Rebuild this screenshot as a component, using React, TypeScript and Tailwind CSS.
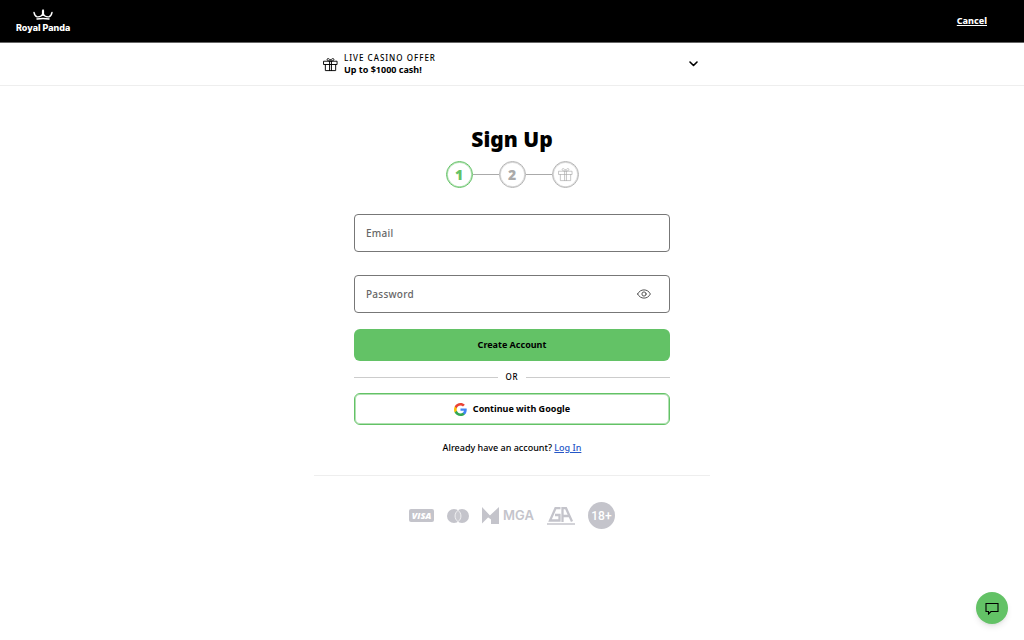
import { useState } from 'react';

const STROKE = {
  fill: 'none',
  stroke: 'currentColor',
  strokeLinecap: 'round',
  strokeLinejoin: 'round',
} as const;

function GiftIcon({ className, strokeWidth = 1 }: { className: string; strokeWidth?: number }) {
  return (
    <svg viewBox="0 0 16 16" className={className} {...STROKE} strokeWidth={strokeWidth}>
      <path d="M1 4.500h14v3.500H1zM2.500 8v6.500h11V8M7 4.500v10M9 4.500v10" />
      <path d="M7 4.300C5.500 4.300 4.300 3.600 4.300 2.600S6.500 1.200 7.500 3h1c1-1.800 3.200-1.400 3.200-.4S10.500 4.300 9 4.300z" />
    </svg>
  );
}

function EyeIcon() {
  return (
    <svg viewBox="0 0 14 10" className="h-[10px] w-[14px]" {...STROKE}>
      <path d="M.6 5C2 2.300 4.300.9 7 .9S12 2.300 13.400 5C12 7.700 9.700 9.100 7 9.100S2 7.700.6 5z" />
      <circle cx="7" cy="5" r="2.100" />
    </svg>
  );
}

function GoogleIcon() {
  return (
    <svg viewBox="0 0 24 24" className="size-[13px]">
      <path fill="#4285F4" d="M23.500 12.300c0-.9-.1-1.600-.2-2.300H12v4.500h6.500c-.3 1.500-1.100 2.800-2.400 3.700v3h3.900c2.200-2.100 3.500-5.100 3.500-8.900z" />
      <path fill="#34A853" d="M12 24c3.200 0 5.900-1.100 7.900-2.900l-3.900-3c-1.100.7-2.400 1.200-4 1.200-3.100 0-5.800-2.100-6.700-5H1.300v3.100C3.300 21.300 7.300 24 12 24z" />
      <path fill="#FBBC05" d="M5.300 14.300c-.3-.7-.4-1.500-.4-2.300s.1-1.600.4-2.300V6.600h-4C.5 8.200 0 10.100 0 12s.5 3.800 1.300 5.400l4-3.100z" />
      <path fill="#EA4335" d="M12 4.800c1.800 0 3.300.6 4.600 1.800L20 3.200C17.900 1.200 15.200 0 12 0 7.300 0 3.300 2.700 1.300 6.600l4 3.100c.9-2.900 3.600-4.900 6.700-4.900z" />
    </svg>
  );
}

function Logo() {
  return (
    <a href="#home" className="flex flex-col items-center gap-0.5 text-white">
      <svg viewBox="0 0 20 11" className="h-[11px] w-5" {...STROKE} strokeWidth="1.400">
        <path d="M1 3.500c.7 3 1.500 4 3 4.300C6.500 8 9 7 10 4.500c1 2.500 3.500 3.500 6 3.300 1.500-.3 2.300-1.300 3-4.300" />
        <path d="M4 10c3.900-.7 8.100-.7 12 0" />
        <path d="M10 2v4" strokeWidth="2.200" />
        <circle cx="10" cy="1.200" r=".6" fill="currentColor" strokeWidth=".5" />
      </svg>
      <span className="font-['Inter'] text-[9px] leading-3 font-extrabold">Royal Panda</span>
    </a>
  );
}

function Steps() {
  const circle = 'flex size-[27px] items-center justify-center rounded-full border text-sm font-black ring-1 ring-inset';

  return (
    <ol className="mt-1.5 flex items-center justify-center">
      <li className={`${circle} border-[#63c266] text-[#63c266] ring-[#63c266]/50`} aria-current="step">1</li>
      <li className="h-px w-[26px] bg-[#aaa]" role="presentation" />
      <li className={`${circle} border-[#b5b5b5] text-[#aaa] ring-[#b5b5b5]/50`}>2</li>
      <li className="h-px w-[26px] bg-[#aaa]" role="presentation" />
      <li className={`${circle} border-[#b5b5b5] text-[#aaa] ring-[#b5b5b5]/50`} aria-label="Bonus">
        <GiftIcon className="size-[15px]" strokeWidth={0.7} />
      </li>
    </ol>
  );
}

function Field({ id, label, type, children }: { id: string; label: string; type: string; children?: React.ReactNode }) {
  return (
    <div className="flex h-[38px] items-center rounded border border-[#777] px-[11px]">
      <div className="grid min-w-0 flex-1 items-center text-[10px] leading-4 font-medium tracking-wide">
        <input
          id={id}
          type={type}
          placeholder=" "
          className="peer col-start-1 row-start-1 w-full bg-transparent outline-none"
        />
        <label
          htmlFor={id}
          className="pointer-events-none invisible col-start-1 row-start-1 text-[#666] peer-placeholder-shown:visible"
        >
          {label}
        </label>
      </div>
      {children}
    </div>
  );
}

function SignUpForm() {
  const [visible, setVisible] = useState(false);

  return (
    <main className="mx-auto w-full max-w-[396px] border-b border-[#eee] px-10 pt-[37px] pb-5">
      <h1 className="text-center text-[21px] leading-8 font-black">Sign Up</h1>
      <Steps />
      <form className="mt-[26px]" onSubmit={(e) => e.preventDefault()}>
        <div className="flex flex-col gap-[23px]">
          <Field id="email" label="Email" type="email" />
          <Field id="password" label="Password" type={visible ? 'text' : 'password'}>
            <button type="button" aria-label="Show password" className="mr-[7px] text-[#555]" onClick={() => setVisible(!visible)}>
              <EyeIcon />
            </button>
          </Field>
        </div>
        <button type="submit" className="mt-4 h-8 w-full rounded-md bg-[#63c266] text-[9px] font-bold">
          Create Account
        </button>
        <div className="flex h-8 items-center gap-2">
          <span className="h-px flex-1 bg-[#ccc]" />
          <span className="text-[8px] font-medium tracking-widest">OR</span>
          <span className="h-px flex-1 bg-[#ccc]" />
        </div>
        <button type="button" className="flex h-8 w-full items-center justify-center gap-1.5 rounded-md border border-[#63c266] text-[9px] font-bold ring-1 ring-[#63c266]/50 ring-inset">
          <GoogleIcon />
          Continue with Google
        </button>
      </form>
      <p className="mt-4 text-center text-[9px] leading-[14px] font-medium">
        Already have an account? <a href="#login" className="text-[#2456c7] underline">Log In</a>
      </p>
    </main>
  );
}

function Footer() {
  return (
    <footer className="flex items-center justify-center gap-[13px] pt-[26px] text-[#c4c4cb]">
      <span className="flex h-[13px] w-[25px] items-center justify-center rounded-xs bg-[#c4c4cb] font-['Open_Sans'] text-[9px] font-extrabold text-white italic">
        VISA
      </span>
      <svg viewBox="0 0 22 14" className="h-[14px] w-[22px]" role="img" aria-label="Mastercard">
        <circle cx="7" cy="7" r="7" fill="#c4c4cb" />
        <circle cx="15" cy="7" r="7" fill="#c4c4cb" />
        <path d="M11 1.300a7 7 0 0 1 0 11.400 7 7 0 0 1 0-11.400z" fill="#c9c9cf" stroke="#fff" strokeWidth=".7" />
      </svg>
      <span className="flex items-center gap-1 font-['Inter'] text-[13px] font-semibold">
        <svg viewBox="0 0 17 17" className="size-[17px]" fill="currentColor">
          <path d="M0 0l8 8.500L0 16.500zM17 0v17H9v-4.500l-3-2.200z" />
        </svg>
        MGA
      </span>
      <svg viewBox="0 0 28 18" className="h-[18px] w-7" role="img" aria-label="GamblingAware" {...STROKE} strokeWidth="2" strokeLinecap="butt" strokeLinejoin="miter">
        <path d="M0 17h28" strokeWidth="1.500" />
        <path d="M13.500 1.200H8.500L3 13.500h9.500V8H8M15.500 15V1.200h3.500l6 13.300M15 9h7" strokeWidth="2.300" />
      </svg>
      <span className="flex size-[27px] items-center justify-center rounded-full bg-[#c4c4cb] font-['Roboto'] text-xs font-medium text-white">
        18+
      </span>
    </footer>
  );
}

export default function App() {
  return (
    <div className="min-h-screen bg-white font-['Noto_Sans',sans-serif] text-black">
      <header className="flex h-[43px] items-center justify-between border-b border-[#666] bg-black pr-[37px] pl-4">
        <Logo />
        <a href="#cancel" className="text-[9px] font-extrabold text-white underline">Cancel</a>
      </header>

      <section className="border-b border-[#eee]">
        <button type="button" className="mx-auto flex h-[42px] w-full max-w-[396px] items-center pr-3 pl-[9px] text-left">
          <GiftIcon className="size-[15px]" />
          <span className="ml-1.5 flex flex-1 flex-col">
            <span className="text-[8px] leading-3 font-medium tracking-[1px]">LIVE CASINO OFFER</span>
            <span className="text-[9px] leading-3 font-bold">Up to $1000 cash!</span>
          </span>
          <svg viewBox="0 0 9 6" className="h-1.5 w-[9px]" {...STROKE} strokeWidth="1.600">
            <path d="M1 1l3.500 3.500L8 1" />
          </svg>
        </button>
      </section>

      <SignUpForm />
      <Footer />

      <button
        type="button"
        aria-label="Open chat"
        className="fixed right-4 bottom-4 flex size-8 items-center justify-center rounded-full bg-[#63c266] shadow-md"
      >
        <svg viewBox="0 0 14 13" className="h-[13px] w-[14px]" {...STROKE} strokeWidth="1.100" strokeLinejoin="miter">
          <path d="M1 1.500h12v8H6L3.500 12V9.500H1z" />
        </svg>
      </button>
    </div>
  );
}
